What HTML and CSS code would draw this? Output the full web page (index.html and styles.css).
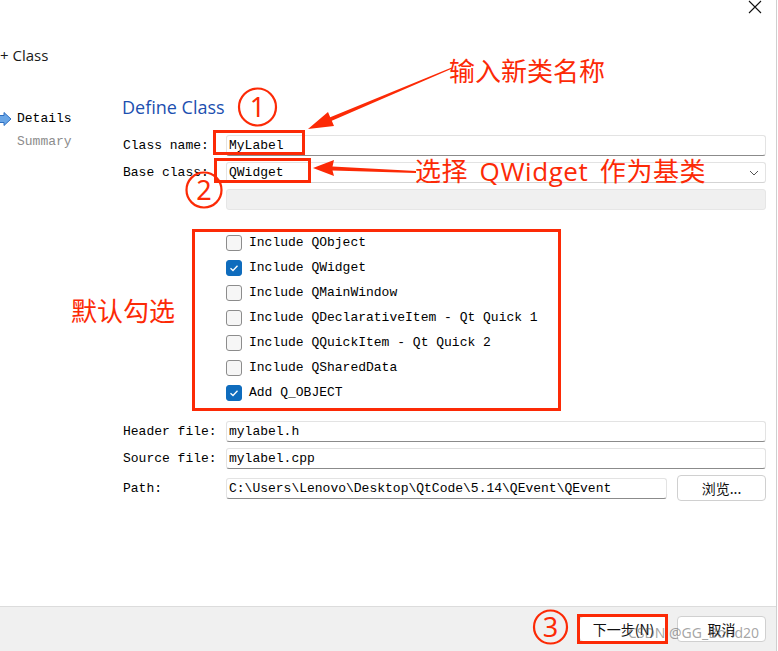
FILE: index.html
```html
<!DOCTYPE html>
<html lang="zh-CN">
<head>
<meta charset="utf-8">
<title>C++ Class Wizard</title>
<link rel="stylesheet" href="styles.css">
</head>
<body>
<div class="window">
  <div class="titlebar">
    <div class="title">+ Class</div>
    <svg class="close" width="14" height="14" viewBox="0 0 14 14"><path d="M1 1L13 13M13 1L1 13" stroke="#111" stroke-width="1.1" fill="none"/></svg>
  </div>
  <div class="main">
    <nav class="steps">
      <div class="step current">
        <svg class="step-arrow" width="12" height="14" viewBox="0 0 12 14"><path d="M-2 3.5H4V0.5L11 7L4 13.5V10.5H-2Z" fill="#6aa6e6" stroke="#2f6fc0" stroke-width="1"/></svg>
        <span>Details</span>
      </div>
      <div class="step"><span>Summary</span></div>
    </nav>
    <section class="page">
      <h1 class="heading">Define Class</h1>
      <div class="form">
        <div class="row"><span class="label">Class name:</span><div class="field">MyLabel</div></div>
        <div class="row"><span class="label">Base class:</span><div class="field combo"><span>QWidget</span><svg width="10" height="6" viewBox="0 0 10 6"><path d="M1 1L5 5L9 1" stroke="#555" stroke-width="1" fill="none"/></svg></div></div>
        <div class="row"><span class="label"></span><div class="field disabled"></div></div>
      </div>
      <div class="checks">
        <div class="check"><span class="box"></span><span>Include QObject</span></div>
        <div class="check"><span class="box on"><svg width="14" height="14" viewBox="0 0 14 14"><path d="M3.5 7.2L6 9.5L10.5 4.8" stroke="#fff" stroke-width="1.3" fill="none"/></svg></span><span>Include QWidget</span></div>
        <div class="check"><span class="box"></span><span>Include QMainWindow</span></div>
        <div class="check"><span class="box"></span><span>Include QDeclarativeItem - Qt Quick 1</span></div>
        <div class="check"><span class="box"></span><span>Include QQuickItem - Qt Quick 2</span></div>
        <div class="check"><span class="box"></span><span>Include QSharedData</span></div>
        <div class="check"><span class="box on"><svg width="14" height="14" viewBox="0 0 14 14"><path d="M3.5 7.2L6 9.5L10.5 4.8" stroke="#fff" stroke-width="1.3" fill="none"/></svg></span><span>Add Q_OBJECT</span></div>
      </div>
      <div class="form files">
        <div class="row"><span class="label">Header file:</span><div class="field">mylabel.h</div></div>
        <div class="row"><span class="label">Source file:</span><div class="field">mylabel.cpp</div></div>
        <div class="row path"><span class="label">Path:</span><div class="field">C:\Users\Lenovo\Desktop\QtCode\5.14\QEvent\QEvent</div><button class="btn browse">浏览...</button></div>
      </div>
    </section>
  </div>
  <div class="footer">
    <button class="btn">下一步(N)</button>
    <button class="btn">取消</button>
  </div>

  <svg class="marks" width="778" height="651" viewBox="0 0 778 651">
    <g fill="none" stroke="#fc2a06" stroke-width="3">
      <rect x="214.5" y="131.5" width="89" height="22"/>
      <rect x="215.5" y="159.5" width="94" height="22"/>
      <rect x="193.5" y="230.5" width="366" height="179"/>
      <rect x="578.5" y="615.5" width="88" height="27"/>
    </g>
    <g fill="none" stroke="#fc2a06" stroke-width="2.2">
      <circle cx="257.5" cy="107" r="18.5"/>
      <circle cx="204" cy="190" r="17.5"/>
      <circle cx="550.5" cy="627" r="16.5"/>
    </g>
    <g fill="#fc2a06" font-family="Noto Sans, sans-serif" font-size="27" text-anchor="middle">
      <text x="257.5" y="117">1</text>
      <text x="204" y="200">2</text>
      <text x="550.5" y="637">3</text>
    </g>
    <g fill="#fc2a06">
      <path d="M308 129L334 126L331.8 120.8L452.3 68.6L451.7 67.4L330.2 117.2L328 112Z"/>
      <path d="M313 168L334 160L332.5 166.5L416 171L416 173L332.5 170.5L334 176Z"/>
    </g>
  </svg>
  <div class="note note-name">输入新类名称</div>
  <div class="note note-base">选择 QWidget 作为基类</div>
  <div class="note note-default">默认勾选</div>
  <div class="watermark">CSDN @GG_Bond20</div>
</div>
</body>
</html>
```
FILE: styles.css
```css
* { box-sizing: border-box; margin: 0; padding: 0; }
html, body { width: 778px; height: 651px; overflow: hidden; background: #fff; }
body { font-family: "Liberation Mono", "Noto Sans CJK SC", monospace; font-size: 13px; color: #000; }

.window {
  position: relative;
  width: 777px;
  height: 651px;
  display: flex;
  flex-direction: column;
  border-right: 1px solid #cfcfcf;
}

.titlebar { height: 80px; display: flex; justify-content: space-between; align-items: flex-start; }
.title { margin-top: 45px; font: 15px/20px "Open Sans", sans-serif; color: #1a1a1a; }
.close { margin: 0 14px 0 0; }

.main { flex: 1; display: flex; }
.steps { width: 122px; padding-top: 29px; display: flex; flex-direction: column; gap: 3px; }
.step { height: 20px; line-height: 20px; padding-left: 17px; color: #8c8c8c; display: flex; align-items: center; }
.step.current { padding-left: 0; color: #000; gap: 5px; }

.page { flex: 1; padding-right: 10px; }
.heading { margin-top: 15px; font: 400 18px/24px "Open Sans", sans-serif; color: #1c4fb0; }

.form { margin-top: 16px; display: flex; flex-direction: column; gap: 6px; }
.row { display: flex; align-items: center; }
.label { width: 104px; padding-left: 1px; white-space: pre; }
.field {
  flex: 1;
  height: 21px;
  line-height: 19px;
  padding-left: 2px;
  border: 1px solid #e3e3e3;
  border-bottom-color: #8b8b8b;
  border-radius: 3px;
  background: #fff;
  white-space: nowrap;
}
.combo { display: flex; justify-content: space-between; align-items: center; padding-right: 6px; border-bottom-color: #d4d4d4; }
.disabled { background: #f0f0f0; border-color: #e6e6e6; }

.checks { margin: 20px 0 0 104px; display: flex; flex-direction: column; }
.check { height: 25px; display: flex; align-items: center; gap: 7px; }
.box {
  width: 16px; height: 16px;
  border: 1px solid #8c8c8c; border-radius: 3px;
  background: #f6f6f6;
  display: flex; align-items: center; justify-content: center;
}
.box.on { background: #0f6cbd; border-color: #0f6cbd; }

.files { margin-top: 16px; }
.path .field { flex: none; width: 441px; }
.btn {
  height: 26px;
  width: 89px;
  border: 1px solid #d0d0d0;
  border-radius: 4px;
  background: #fff;
  font: 14px/24px "Noto Sans CJK SC", sans-serif;
  color: #111;
}
.browse { margin-left: 10px; }

.footer {
  height: 45px;
  border-top: 1px solid #dcdcdc;
  background: #f0f0f0;
  display: flex;
  justify-content: flex-end;
  gap: 9px;
  padding: 9px 10px 0 0;
}

.marks { position: absolute; left: 0; top: 0; pointer-events: none; }
.note {
  position: absolute;
  font: 26px/28px "Open Sans", "Noto Sans CJK SC", sans-serif;
  color: #fc2a06;
  white-space: nowrap;
}
.note-name { left: 449px; top: 57px; }
.note-base { left: 415px; top: 157px; word-spacing: 4px; letter-spacing: 0.6px; }
.note-default { left: 71px; top: 297px; }
.watermark {
  position: absolute;
  left: 628px; top: 624px;
  font: 14px/18px "Noto Sans", sans-serif;
  color: rgba(90, 90, 90, 0.55);
  white-space: nowrap;
}
```
